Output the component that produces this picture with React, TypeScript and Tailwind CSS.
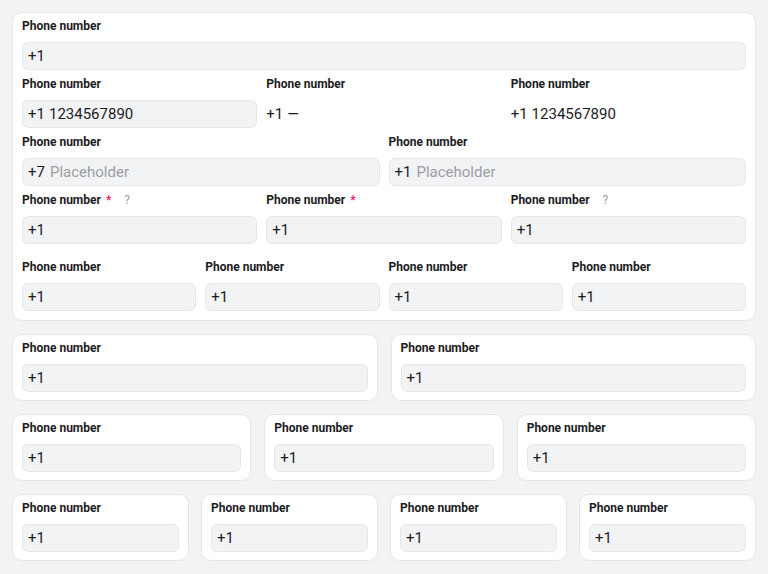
import React from 'react';

type FieldProps = {
  code?: string;
  value?: string;
  placeholder?: string;
  required?: boolean;
  hint?: boolean;
  plain?: boolean;
};

function Field({ code = '+1', value, placeholder, required, hint, plain }: FieldProps) {
  return (
    <div className="min-w-0">
      <div className="flex items-center h-[16px] mb-[8px] text-[12px] leading-[16px] font-bold text-[#1c1c1e]">
        <span>Phone number</span>
        {required && <span className="ml-[5px] text-[#f0186b]">*</span>}
        {hint && <span className="ml-[13px] font-normal text-[#a0a0a5]">?</span>}
      </div>
      <div
        className={
          plain
            ? 'flex items-center h-[28px] text-[15px] text-[#1c1c1e]'
            : 'flex items-center h-[28px] px-[5px] rounded-[6px] border border-[#e6e7ea] bg-[#f2f3f5] text-[15px] text-[#1c1c1e]'
        }
      >
        <span>{code}</span>
        {value && <span className="ml-[4px]">{value}</span>}
        {placeholder && <span className="ml-[5px] text-[#9c9ea3]">{placeholder}</span>}
      </div>
    </div>
  );
}

function Card({ children, main }: { children: React.ReactNode; main?: boolean }) {
  return (
    <div
      className={
        main
          ? 'min-w-0 bg-white border border-[#e4e6ea] rounded-[10px] pt-[5px] pb-[9px] px-[9px]'
          : 'min-w-0 bg-white border border-[#e4e6ea] rounded-[10px] pt-[5px] pb-[8px] px-[9px]'
      }
    >
      {children}
    </div>
  );
}

export default function App() {
  return (
    <div
      className="min-h-[574px] bg-[#f2f3f5] p-[12px] flex flex-col gap-[13px]"
      style={{ fontFamily: 'Roboto, "Liberation Sans", sans-serif' }}
    >
      <Card main>
        <div className="flex flex-col gap-[6px]">
          <Field />
          <div className="grid grid-cols-3 gap-[9px]">
            <Field value="1234567890" />
            <Field value="—" plain />
            <Field value="1234567890" plain />
          </div>
          <div className="grid grid-cols-2 gap-[9px]">
            <Field code="+7" placeholder="Placeholder" />
            <Field placeholder="Placeholder" />
          </div>
          <div className="grid grid-cols-3 gap-[9px]">
            <Field required hint />
            <Field required />
            <Field hint />
          </div>
          <div className="grid grid-cols-4 gap-[9px] mt-[9px]">
            <Field />
            <Field />
            <Field />
            <Field />
          </div>
        </div>
      </Card>

      <div className="grid grid-cols-2 gap-[13px]">
        <Card><Field /></Card>
        <Card><Field /></Card>
      </div>

      <div className="grid grid-cols-3 gap-[13px]">
        <Card><Field /></Card>
        <Card><Field /></Card>
        <Card><Field /></Card>
      </div>

      <div className="grid grid-cols-4 gap-[12px]">
        <Card><Field /></Card>
        <Card><Field /></Card>
        <Card><Field /></Card>
        <Card><Field /></Card>
      </div>
    </div>
  );
}
